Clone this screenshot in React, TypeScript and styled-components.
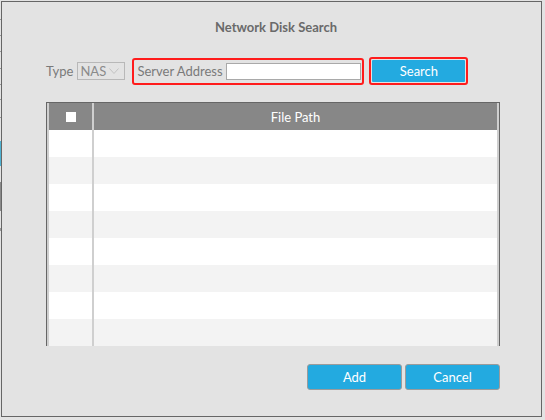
import React from "react";
import styled, { createGlobalStyle } from "styled-components";

const GlobalStyle = createGlobalStyle`
  html, body { margin: 0; padding: 0; }
  body {
    background: #e3e3e3;
    font-family: Lato, "Liberation Sans", sans-serif;
  }
  * { box-sizing: border-box; }
`;

const Page = styled.div`
  display: flex;
  align-items: flex-start;
  padding-top: 1px;
  width: 545px;
  height: 420px;
  overflow: hidden;
`;

const Edge = styled.div`
  width: 1px;
  height: 240px;
  flex: none;
  background: linear-gradient(
    to bottom,
    #e3e3e3 0 18px, #9a9a9a 18px 19px, #e3e3e3 19px 34px, #9a9a9a 34px 35px,
    #e3e3e3 35px 50px, #9a9a9a 50px 51px, #e3e3e3 51px 67px, #9a9a9a 67px 68px,
    #e3e3e3 68px 83px, #9a9a9a 83px 84px, #e3e3e3 84px 98px, #9a9a9a 98px 99px,
    #e3e3e3 99px 116px, #9a9a9a 116px 117px, #e3e3e3 117px 140px,
    #4fb2d2 140px 165px, #e3e3e3 165px 181px, #8a8a8a 181px 210px,
    #e3e3e3 210px 227px, #9a9a9a 227px 230px, #e3e3e3 230px
  );
`;

const Dialog = styled.div`
  width: 541px;
  height: 416px;
  flex: none;
  border: 1px solid #666;
  background: #e3e3e3;
  display: flex;
  flex-direction: column;
  padding: 15px 41px 0 44px;
`;

const Title = styled.div`
  height: 20px;
  line-height: 20px;
  text-align: center;
  padding-left: 6px;
  font-size: 13px;
  font-weight: 700;
  color: #6a6a6a;
`;

const Toolbar = styled.div`
  margin-top: 20px;
  height: 28px;
  display: flex;
  align-items: center;
`;

const Label = styled.span`
  font-size: 13px;
  color: #7a7a7a;
  white-space: nowrap;
`;

const SelectBox = styled.div`
  width: 48px;
  height: 18px;
  margin-left: 4px;
  border: 1px solid #b8b8b8;
  background: #e3e3e3;
  display: flex;
  align-items: center;
  justify-content: space-between;
  padding: 0 5px 0 2px;
  font-size: 13px;
  color: #8a8a8a;
`;

const Highlight = styled.div<{ $w: number; $h: number; $gap: number }>`
  width: ${(p) => p.$w}px;
  height: ${(p) => p.$h}px;
  margin-left: ${(p) => p.$gap}px;
  border: 2px solid #ff1c1c;
  border-radius: 3px;
  display: flex;
  align-items: center;
`;

const AddressField = styled(Highlight)`
  padding: 0 3px;
  gap: 3px;
`;

const SearchFrame = styled(Highlight)`
  padding: 1px;
`;

const TextInput = styled.input`
  width: 135px;
  height: 17px;
  margin-left: auto;
  border: 1px solid #a9a9a9;
  background: #fff;
  padding: 0 2px;
  outline: none;
  font-family: inherit;
  font-size: 12px;
`;

const BlueButton = styled.button<{ $w?: number; $h?: number }>`
  width: ${(p) => (p.$w ? `${p.$w}px` : "100%")};
  height: ${(p) => (p.$h ? `${p.$h}px` : "100%")};
  background: #23aae0;
  color: #fff;
  font-family: inherit;
  font-size: 13px;
  padding: 0;
  cursor: pointer;
`;

const SearchButton = styled(BlueButton)`
  border: none;
  border-radius: 1px;
`;

const FooterButton = styled(BlueButton)`
  border: 1px solid #9b9b9b;
  border-radius: 3px;
`;

const TableFrame = styled.div`
  margin-top: 17px;
  width: 454px;
  height: 244px;
  border: 1px solid #666;
  border-bottom: none;
  overflow: hidden;
`;

const Table = styled.div`
  border-left: 2px solid #cfcfcf;
  border-right: 2px solid #cfcfcf;
  display: flex;
  flex-direction: column;
`;

const Row = styled.div<{ $variant: "head" | "odd" | "even" }>`
  display: grid;
  grid-template-columns: 45px 1fr;
  height: 27px;
  background: ${(p) =>
    p.$variant === "head" ? "#878787" : p.$variant === "even" ? "#f3f3f3" : "#ffffff"};
  color: #fff;
  font-size: 13px;
`;

const Cell = styled.div<{ $divider?: boolean }>`
  display: flex;
  align-items: center;
  justify-content: center;
  border-right: ${(p) => (p.$divider ? "2px solid #cfcfcf" : "none")};
`;

const CheckSquare = styled.span`
  width: 10px;
  height: 10px;
  background: #fff;
  display: block;
`;

const Footer = styled.div`
  margin-top: 18px;
  display: flex;
  justify-content: flex-end;
  gap: 3px;
`;

const Chevron = () => (
  <svg width="10" height="6" viewBox="0 0 10 6">
    <polyline points="0.5,0.5 5,5.5 9.5,0.5" fill="none" stroke="#c2c2c2" strokeWidth="1" />
  </svg>
);

export default function App() {
  const rows = Array.from({ length: 8 }, (_, i) => i);
  return (
    <>
      <GlobalStyle />
      <Page>
        <Edge />
        <Dialog>
          <Title>Network Disk Search</Title>
          <Toolbar>
            <Label>Type</Label>
            <SelectBox>
              <span>NAS</span>
              <Chevron />
            </SelectBox>
            <AddressField $w={232} $h={27} $gap={7}>
              <Label>Server Address</Label>
              <TextInput type="text" />
            </AddressField>
            <SearchFrame $w={99} $h={28} $gap={5}>
              <SearchButton>Search</SearchButton>
            </SearchFrame>
          </Toolbar>
          <TableFrame>
            <Table>
              <Row $variant="head">
                <Cell $divider>
                  <CheckSquare />
                </Cell>
                <Cell>File Path</Cell>
              </Row>
              {rows.map((i) => (
                <Row key={i} $variant={i % 2 === 0 ? "odd" : "even"}>
                  <Cell $divider />
                  <Cell />
                </Row>
              ))}
            </Table>
          </TableFrame>
          <Footer>
            <FooterButton $w={95} $h={26}>Add</FooterButton>
            <FooterButton $w={95} $h={26}>Cancel</FooterButton>
          </Footer>
        </Dialog>
      </Page>
    </>
  );
}
